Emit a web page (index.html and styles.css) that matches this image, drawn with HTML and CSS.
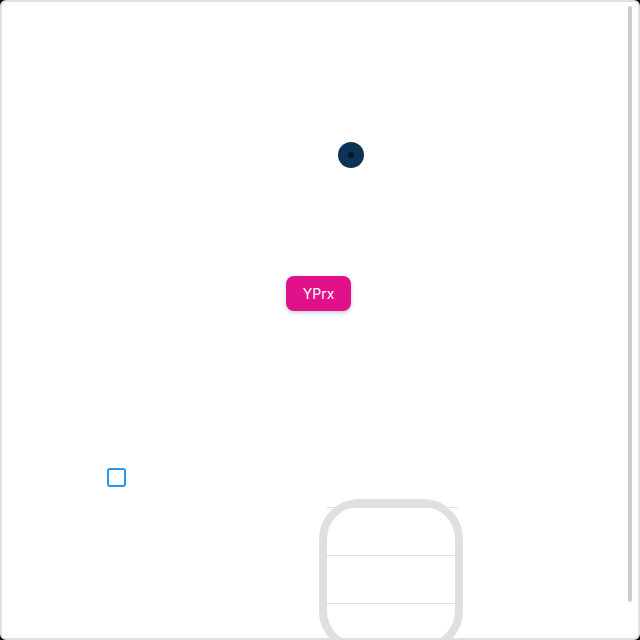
FILE: index.html
```html
<!DOCTYPE html>
<html>
<head>
<meta charset="utf-8">
<link rel="stylesheet" href="styles.css">
</head>
<body>
<div class="frame">
  <div class="canvas">
    <div class="radio"><span class="radio-dot"></span></div>
    <button class="chip">YPrx</button>
    <div class="check"></div>
    <div class="listbox">
      <div class="row"></div>
      <div class="row"></div>
      <div class="row"></div>
    </div>
  </div>
  <div class="scrollbar"></div>
</div>
</body>
</html>
```
FILE: styles.css
```css
html, body {
  margin: 0;
  padding: 0;
  background: #000;
}
.frame {
  position: relative;
  width: 640px;
  height: 640px;
  box-sizing: border-box;
  border: 2px solid #e0e0e0;
  border-radius: 6px;
  background: #fff;
  overflow: hidden;
  font-family: Inter, "Open Sans", sans-serif;
}
.canvas {
  display: flex;
  flex-direction: column;
  align-items: flex-start;
}
.radio {
  margin-top: 140px;
  margin-left: 336px;
  width: 26px;
  height: 26px;
  border-radius: 50%;
  background: #0c3355;
  display: flex;
  align-items: center;
  justify-content: center;
}
.radio-dot {
  width: 6px;
  height: 6px;
  border-radius: 50%;
  background: #061828;
}
.chip {
  margin-top: 108px;
  margin-left: 284px;
  width: 65px;
  height: 35px;
  border: none;
  border-radius: 8px;
  background: #e1118a;
  color: #fff;
  font-family: Inter, "Open Sans", sans-serif;
  font-size: 14px;
  padding: 0;
  box-shadow: 0 2px 4px rgba(60, 110, 110, 0.3);
}
.check {
  margin-top: 157px;
  margin-left: 105px;
  width: 19px;
  height: 19px;
  box-sizing: border-box;
  border: 2px solid #2196f3;
  border-radius: 3px;
}
.listbox {
  position: relative;
  margin-top: 12px;
  margin-left: 317px;
  width: 144px;
  height: 152px;
  box-sizing: border-box;
  padding: 8px 7px 0 8px;
}
.listbox::after {
  content: "";
  position: absolute;
  inset: 0;
  border: 8px solid #e0e0e0;
  border-radius: 40px;
}
.row {
  height: 48px;
  border-top: 1px solid #e0e0e0;
  box-sizing: border-box;
}
.row:first-child {
  margin-right: -2px;
}
.scrollbar {
  position: absolute;
  top: 4px;
  right: 6px;
  width: 4px;
  height: 596px;
  border-radius: 2px;
  background: #cdcdcd;
}
```
